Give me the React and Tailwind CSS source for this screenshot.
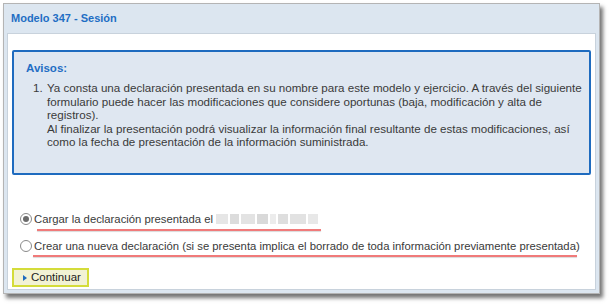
import React from "react";

const Radio = ({ checked }) => (
  <span className="w-[12px] h-[12px] rounded-full border border-[#8a8a8a] bg-white flex items-center justify-center shrink-0">
    {checked && <span className="w-[6px] h-[6px] rounded-full bg-[#6b6b6b]" />}
  </span>
);

const BlurredDate = () => (
  <span className="inline-flex items-center gap-[2px] ml-[3px] h-[12px]">
    <span className="w-[12px] h-[10px] bg-[#e6e6e6]" />
    <span className="w-[9px] h-[10px] bg-[#dcdcdc]" />
    <span className="w-[14px] h-[10px] bg-[#e3e3e3]" />
    <span className="w-[11px] h-[10px] bg-[#d9d9d9]" />
    <span className="w-[6px] h-[10px] bg-[#ececec]" />
    <span className="w-[10px] h-[10px] bg-[#dedede]" />
    <span className="w-[16px] h-[10px] bg-[#e2e2e2]" />
    <span className="w-[10px] h-[10px] bg-[#e8e8e8]" />
  </span>
);

export default function App() {
  return (
    <div className="w-[612px] h-[308px] bg-white pt-[3px] pl-[3px] font-['Liberation_Sans',Arial,sans-serif]">
      <div className="w-[597px] h-[291px] bg-[#dce6f0] border border-[#b4b4b4] shadow-[3px_4px_4px_rgba(0,0,0,0.55)] flex flex-col px-[3px] pb-[3px]">
        <div className="h-[29px] flex items-center pl-[4px] shrink-0">
          <span className="text-[11px] font-bold text-[#1f6ec4]">Modelo 347 - Sesión</span>
        </div>
        <div className="flex-1 bg-white border border-[#c8d2dc] flex flex-col px-[4px]">
          <div className="mt-[16px] h-[125px] bg-[#dfe7f1] border-2 border-[#1e6bbf] rounded-[2px] pl-[12px] pt-[10px]">
            <div className="text-[11.5px] font-bold text-[#1f6ec4] leading-[13px] mb-[6px]">Avisos:</div>
            <div className="flex text-[11.6px] text-[#3a3a3a] leading-[13.5px]">
              <span className="w-[14px] ml-[7px] shrink-0">1.</span>
              <div className="w-[538px] shrink-0">
                <p>Ya consta una declaración presentada en su nombre para este modelo y ejercicio. A través del siguiente formulario puede hacer las modificaciones que considere oportunas (baja, modificación y alta de registros).</p>
                <p>Al finalizar la presentación podrá visualizar la información final resultante de estas modificaciones, así como la fecha de presentación de la información suministrada.</p>
              </div>
            </div>
          </div>
          <div className="mt-[36px] flex flex-col gap-[11px] pl-[8px] text-[#3a3a3a] text-[11.3px] whitespace-nowrap">
            <label className="flex items-center gap-[2px] h-[16px]">
              <Radio checked />
              <span className="relative flex items-center">
                Cargar la declaración presentada el
                <BlurredDate />
                <span className="absolute left-[3px] right-[-3px] bottom-[-4px] h-[2px] bg-[#f07a7a] shadow-[0_1px_1px_rgba(0,0,0,0.15)]" />
              </span>
            </label>
            <label className="flex items-center gap-[2px] h-[16px]">
              <Radio />
              <span className="relative">
                Crear una nueva declaración (si se presenta implica el borrado de toda información previamente presentada)
                <span className="absolute left-[-1px] right-[3px] bottom-[-3px] h-[2px] bg-[#f07a7a] shadow-[0_1px_1px_rgba(0,0,0,0.15)]" />
              </span>
            </label>
          </div>
          <div className="mt-[14px]">
            <button className="h-[19px] w-[77px] flex items-center gap-[4px] pl-[9px] bg-[#f2f2d4] border-2 border-[#d4dc3a] text-[11.5px] text-[#222]">
              <span className="w-0 h-0 border-y-[3.5px] border-y-transparent border-l-[4px] border-l-[#1e6bbf]" />
              Continuar
            </button>
          </div>
        </div>
      </div>
    </div>
  );
}
